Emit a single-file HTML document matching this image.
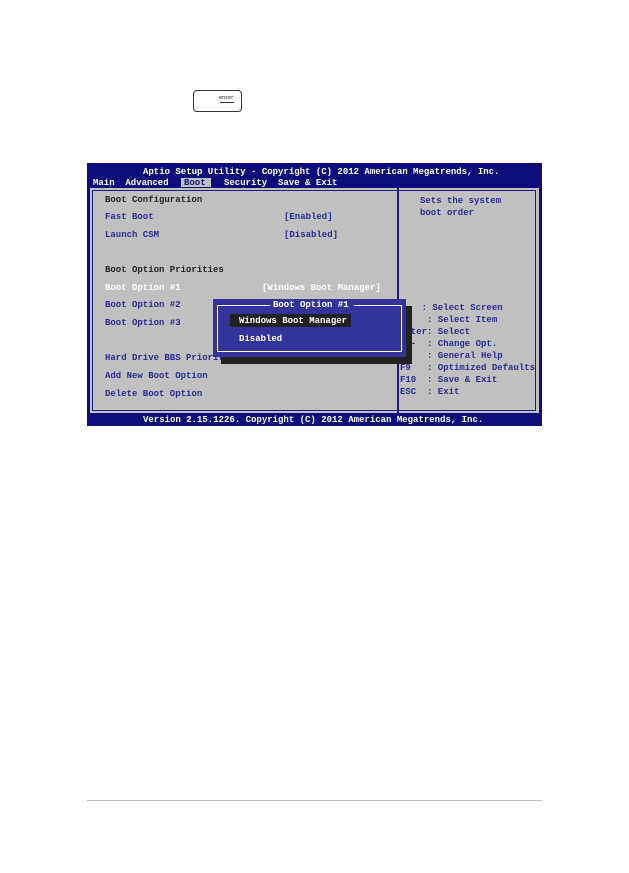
<!DOCTYPE html>
<html><head><style>
body{margin:0;background:#fff;width:629px;height:873px;position:relative;overflow:hidden;font-family:"Liberation Mono",monospace;font-weight:bold;font-size:9px}
.a{position:absolute;white-space:pre;line-height:10px}
.b{color:#2b2b8f}
.k{color:#222}
.w{color:#fff}
.h{line-height:12px}
</style></head><body>
<div style="position:absolute;left:193px;top:90px;width:47px;height:20px;border:1px solid #333;border-radius:4px"></div>
<div class="a" style="left:219px;top:93px;font-size:5px;font-weight:normal">enter</div>
<div style="position:absolute;left:220px;top:102px;width:14px;height:1px;background:#333"></div>

<div style="position:absolute;left:87px;top:163px;width:455px;height:263px;background:#0c0c7a"></div>
<div style="position:absolute;left:90px;top:188px;width:449px;height:225px;background:#c0c0c0"></div>
<div style="position:absolute;left:92px;top:190px;width:444px;height:221px;border:1px solid #1a1a80;box-sizing:border-box"></div>
<div style="position:absolute;left:397px;top:188px;width:2px;height:225px;background:#1a1a80"></div>
<div class="a w" style="left:143px;top:167px">Aptio Setup Utility - Copyright (C) 2012 American Megatrends, Inc.</div>
<div class="a w" style="left:93px;top:178px">Main  Advanced </div>
<div style="position:absolute;left:181px;top:178px;width:30px;height:9px;background:#c0c0c0"></div>
<div class="a" style="left:184px;top:178px;color:#0c0c7a">Boot</div>
<div class="a w" style="left:224px;top:178px">Security  Save &amp; Exit</div>

<div class="a k" style="left:105px;top:195px">Boot Configuration</div>
<div class="a b" style="left:105px;top:212px">Fast Boot</div>
<div class="a b" style="left:284px;top:212px">[Enabled]</div>
<div class="a b" style="left:105px;top:230px">Launch CSM</div>
<div class="a b" style="left:284px;top:230px">[Disabled]</div>
<div class="a k" style="left:105px;top:265px">Boot Option Priorities</div>
<div class="a w" style="left:105px;top:283px">Boot Option #1</div>
<div class="a w" style="left:262px;top:283px">[Windows Boot Manager]</div>
<div class="a b" style="left:105px;top:300px">Boot Option #2</div>
<div class="a b" style="left:105px;top:318px">Boot Option #3</div>
<div class="a b" style="left:105px;top:353px">Hard Drive BBS Priorities</div>
<div class="a b" style="left:105px;top:371px">Add New Boot Option</div>
<div class="a b" style="left:105px;top:389px">Delete Boot Option</div>

<div class="a b" style="left:420px;top:196px">Sets the system</div>
<div class="a b" style="left:420px;top:208px">boot order</div>
<div class="a b h" style="left:400px;top:302px">→←  : Select Screen
↑↓   : Select Item
Enter: Select
+/-  : Change Opt.
F1   : General Help
F9   : Optimized Defaults
F10  : Save &amp; Exit
ESC  : Exit</div>

<div style="position:absolute;left:221px;top:306px;width:191px;height:58px;background:#222"></div>
<div style="position:absolute;left:213px;top:299px;width:193px;height:58px;background:#333399"></div>
<div style="position:absolute;left:217px;top:305px;width:185px;height:47px;border:1px solid #fff;box-sizing:border-box"></div>
<div style="position:absolute;left:270px;top:300px;width:84px;height:10px;background:#333399"></div>
<div class="a w" style="left:273px;top:300px">Boot Option #1</div>
<div style="position:absolute;left:230px;top:314px;width:121px;height:13px;background:#222"></div>
<div class="a w" style="left:239px;top:316px">Windows Boot Manager</div>
<div class="a w" style="left:239px;top:334px">Disabled</div>

<div class="a w" style="left:143px;top:415px">Version 2.15.1226. Copyright (C) 2012 American Megatrends, Inc.</div>

<div style="position:absolute;left:87px;top:800px;width:455px;height:1px;background:#bbb"></div>
</body></html>
